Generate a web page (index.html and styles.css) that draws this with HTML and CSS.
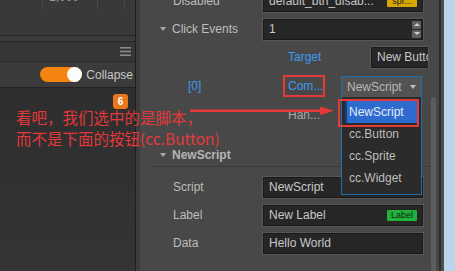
FILE: index.html
```html
<!DOCTYPE html>
<html lang="zh">
<head>
<meta charset="utf-8">
<title>Inspector</title>
<link rel="stylesheet" href="styles.css">
</head>
<body>
<div class="app">
  <aside class="left">
    <div class="grid-area">
      <div class="cells">
        <div class="cell c1"></div>
        <div class="cell c2"><div class="cell-text">1,000</div></div>
        <div class="cell c3"></div>
      </div>
    </div>
    <div class="gap"></div>
    <div class="panel-head">
      <svg class="menu" width="11" height="9" viewBox="0 0 11 9"><rect x="0" y="0" width="11" height="1.6" fill="#8a8a8a"/><rect x="0" y="3.7" width="11" height="1.6" fill="#8a8a8a"/><rect x="0" y="7.4" width="11" height="1.6" fill="#8a8a8a"/></svg>
    </div>
    <div class="toolbar">
      <span class="toggle"><span class="knob"></span></span>
      <span class="toggle-label">Collapse</span>
    </div>
    <div class="tree"><span class="badge">6</span></div>
  </aside>
  <div class="splitter"></div>
  <main class="inspector">
    <div class="props">
      <div class="row">
        <span class="lab">Disabled</span>
        <div class="field"><span class="ftext">default_btn_disab...</span><span class="tag tag-spr">spr...</span></div>
      </div>
      <div class="row">
        <span class="lab fold"><i class="tri"></i>Click Events</span>
        <div class="field"><span class="ftext">1</span><span class="spin"><b class="sbtn"><i class="up"></i></b><b class="sbtn"><i class="dn"></i></b></span></div>
      </div>
      <div class="row sub">
        <span class="blue sublab">Target</span>
        <div class="field short"><span class="ftext">New Button</span></div>
      </div>
      <div class="row idx">
        <span class="blue idxlab">[0]</span>
        <span class="blue comp">Com...</span>
        <div class="dd">
          <span class="dd-text">NewScript</span><i class="dd-tri"></i>
          <ul class="dd-list">
            <li class="sel">NewScript</li>
            <li>cc.Button</li>
            <li>cc.Sprite</li>
            <li>cc.Widget</li>
          </ul>
        </div>
      </div>
      <div class="row sub hrow">
        <span class="handler">Han...</span>
      </div>
      <div class="section"><i class="tri"></i>NewScript</div>
      <div class="row first">
        <span class="lab">Script</span>
        <div class="field"><span class="ftext">NewScript</span><span class="tag tag-js"></span></div>
      </div>
      <div class="row">
        <span class="lab">Label</span>
        <div class="field"><span class="ftext">New Label</span><span class="tag tag-label">Label</span></div>
      </div>
      <div class="row">
        <span class="lab">Data</span>
        <div class="field"><span class="ftext">Hello World</span></div>
      </div>
    </div>
    <div class="vscroll"><div class="thumb"></div></div>
  </main>
  <div class="edge"></div>
  <div class="outer"></div>

  <div class="note">看吧，我们选中的是脚本，<br>而不是下面的按钮(cc.Button)</div>
  <svg class="arrow" width="152" height="14" viewBox="0 0 152 14"><line x1="5" y1="6.7" x2="137" y2="6.7" stroke="#e5383b" stroke-width="2.4"/><polygon points="135,2.6 149,6.7 135,11" fill="#e5383b"/></svg>
  <div class="mark mark-sel"></div>
</div>
</body>
</html>
```

FILE: styles.css
```css
* { box-sizing: border-box; margin: 0; padding: 0; }
html, body { width: 455px; height: 271px; overflow: hidden; }
body {
  background: #484848;
  font-family: "Liberation Sans", Arial, sans-serif;
  font-size: 12px;
  color: #bdbdbd;
}
.app { position: relative; display: flex; height: 271px; overflow: hidden; }

/* left panel */
.left {
  width: 136px; flex: none;
  display: flex; flex-direction: column;
  background: #303030;
  border-right: 1px solid #1e1e1e;
}
.grid-area { height: 36px; flex: none; background: #393939; border-bottom: 1px solid #262626; }
.cells { display: flex; height: 10px; }
.cell { height: 10px; border-right: 1px solid #474747; overflow: hidden; }
.c1 { width: 43px; }
.c2 { width: 55px; }
.c3 { width: 27px; }
.cell-text { margin-top: -9px; padding-left: 6px; line-height: 12px; color: #9a9a9a; }
.gap { height: 5px; flex: none; background: #3c3c3c; }
.panel-head {
  height: 21px; flex: none;
  background: #363636;
  border-top: 1px solid #272727; border-bottom: 1px solid #2b2b2b;
  display: flex; justify-content: flex-end; align-items: center;
  padding-right: 4px;
}
.toolbar {
  height: 26px; flex: none;
  background: #3b3b3b;
  border-bottom: 1px solid #222;
  display: flex; align-items: center; justify-content: flex-end;
  gap: 4px; padding-right: 2px;
}
.toggle {
  width: 42px; height: 15px; border-radius: 8px;
  background: #f5830f;
  display: flex; justify-content: flex-end;
}
.knob { width: 15px; height: 15px; border-radius: 50%; background: #fdfdfd; }
.toggle-label { color: #c8c8c8; }
.tree {
  flex: 1;
  background: linear-gradient(#2e2e2e, #343434);
  display: flex; justify-content: flex-end; align-items: flex-start;
  padding: 6px 7px 0 0;
}
.badge {
  width: 15px; height: 15px; border-radius: 3px;
  background: #e8781c; color: #fff;
  font-size: 10px; font-weight: bold; line-height: 15px; text-align: center;
}
.splitter { width: 4px; flex: none; background: #3c3c3c; }

/* inspector */
.inspector { width: 299px; height: 271px; flex: none; display: flex; background: #484848; overflow: hidden; }
.props { width: 290px; flex: none; margin-top: -13px; }
.vscroll { width: 9px; flex: none; display: flex; flex-direction: column; padding: 97px 3px 0 1px; }
.thumb { flex: 1; border-radius: 3px 3px 0 0; background: #5d5d5d; }
.edge { width: 5px; flex: none; background: #4e4e4e; border-left: 2px solid #2b2b2b; }
.outer { flex: 1; background: #bcd5ef; }

.row { height: 28px; display: flex; align-items: center; }
.lab { width: 123px; flex: none; padding-left: 33px; color: #bdbdbd; white-space: nowrap; }
.fold { display: flex; align-items: center; padding-left: 20px; }
.tri {
  width: 0; height: 0; margin-right: 6px;
  border-left: 3.5px solid transparent; border-right: 3.5px solid transparent;
  border-top: 4px solid #a9a9a9;
}
.field {
  width: 160px; height: 21px; flex: none;
  display: flex; align-items: center;
  background: #262626;
  border: 1px solid #191919;
  box-shadow: 0 0 0 1px #575757;
  overflow: hidden;
}
.ftext { flex: 1; min-width: 0; padding-left: 5px; color: #c8c8c8; white-space: nowrap; overflow: hidden; }
.tag {
  flex: none; width: 30px; height: 11px; margin-right: 5px;
  font-size: 9px; line-height: 11px; text-align: center; color: #1a1a1a;
  border-radius: 1px; overflow: hidden;
}
.tag-spr { background: #d7a900; }
.tag-label { background: #21b23b; color: #0b2a10; }
.tag-js { background: #9fb22c; }
.spin { flex: none; display: flex; flex-direction: column; gap: 1px; margin-right: 1px; }
.sbtn { width: 9px; height: 8px; background: #5f5f5f; display: flex; align-items: center; justify-content: center; border-radius: 1px; }
.up, .dn { width: 0; height: 0; border-left: 3px solid transparent; border-right: 3px solid transparent; }
.up { border-bottom: 3px solid #cfcfcf; }
.dn { border-top: 3px solid #cfcfcf; }

.blue { color: #3a9cf0; }
.sub { padding-left: 148px; }
.sublab { width: 83px; flex: none; }
.short { width: 57px; border-right: none; box-shadow: none; border-color: #1b1b1b; outline: 1px solid #575757; outline-offset: 0; }
.short .ftext { padding-left: 5px; }
.idx { height: 30px; }
.idxlab { margin-left: 48px; width: 95px; flex: none; }
.comp {
  width: 42px; height: 22px; flex: none;
  border: 2px solid #e53a3a;
  padding-left: 3px; line-height: 18px;
}
.dd {
  position: relative;
  margin-left: 16px;
  width: 81px; height: 21px; flex: none;
  display: flex; align-items: center;
  padding: 0 5px;
  background: #535353;
  border: 1px solid #1f6fae; border-bottom: none;
}
.dd-text { color: #b8b8b8; }
.dd-tri {
  margin-left: auto;
  width: 0; height: 0;
  border-left: 3.5px solid transparent; border-right: 3.5px solid transparent;
  border-top: 4px solid #c0c0c0;
}
.dd-list {
  position: absolute; top: 100%; left: -1px; right: -1px;
  list-style: none;
  background: #2b2b2b;
  border: 1px solid #1f6fae; border-top: none;
  padding: 4px 4px 5px 3px;
  z-index: 2;
}
.dd-list li { height: 22px; line-height: 22px; padding-left: 4px; color: #bdbdbd; white-space: nowrap; }
.dd-list li.sel { background: #2e6bd0; color: #e6ecf8; border-left: 2px solid #1c3c78; padding-left: 2px; }
.hrow { height: 28px; }
.handler { color: #a8a8a8; }
.section {
  height: 24px; margin: 14px 0 0 12px;
  display: flex; align-items: center;
  padding-left: 8px;
  font-weight: bold; color: #b5b5b5;
  border-bottom: 1px solid #3a3a3a;
}
.first { margin-top: 6px; }

/* annotation overlays */
.note {
  position: absolute; left: 16px; top: 107px;
  font-family: "Noto Sans CJK SC", "Noto Sans", sans-serif;
  font-size: 15.5px; line-height: 21px;
  color: #e5383b; white-space: nowrap;
}
.arrow { position: absolute; left: 185px; top: 104px; }
.mark { position: absolute; border: 2px solid #e53a3a; z-index: 3; }
.mark-sel { left: 338px; top: 99px; width: 81px; height: 28px; }
```
